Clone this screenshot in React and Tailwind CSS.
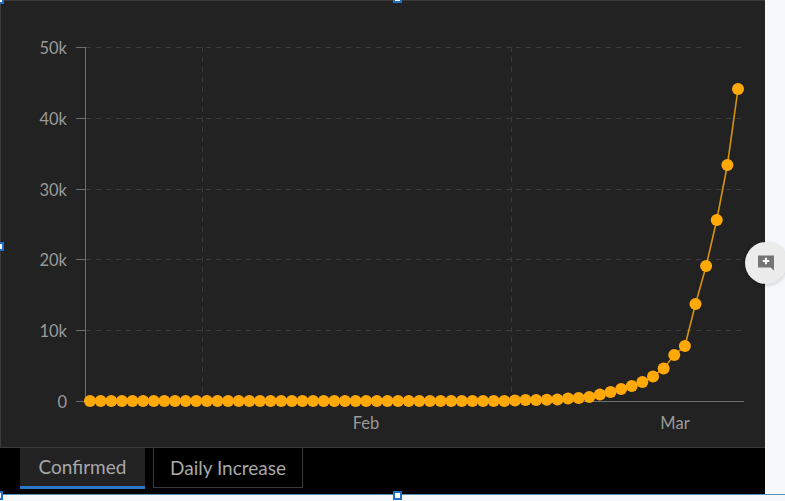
const ys = [
  400,400,400,400,400,400,400,400,400,400,400,400,400,400,400,400,400,400,400,400,400,
  400,400,400,400,400,400,400,400,400,400,400,400,400,400,400,400,400,400,400,
  399.5,399,399,398.8,398.5,397.5,397,396,393.5,391,388,385,381,375.5,367.5,354,345,303,265,219,164,88,
];
const n = ys.length;
const pts = ys.map((y, i) => [90 + (i * (738 - 90)) / (n - 1), y + 1]);
const grid = [47, 118, 189, 259, 330];
const labels = [["50k", 47], ["40k", 118], ["30k", 189], ["20k", 259], ["10k", 330], ["0", 401]];
const font = { fontFamily: "Lato, 'Noto Sans', sans-serif" };

function Chart() {
  return (
    <svg width="765" height="447" viewBox="1 1 765 447" className="block">
      {grid.map((y) => (
        <line key={y} x1="86" x2="744" y1={y + 0.5} y2={y + 0.5} stroke="#3d3d3d" strokeDasharray="5 5" />
      ))}
      {[202, 511].map((x) => (
        <line key={x} x1={x + 0.5} x2={x + 0.5} y1="47" y2="407" stroke="#3a3a3a" strokeDasharray="5 5" />
      ))}
      {labels.map(([t, y]) => (
        <g key={t}>
          <line x1="76" x2="86" y1={y + 0.5} y2={y + 0.5} stroke="#6e6e6e" />
          <text x="67" y={y + 7} textAnchor="end" fontSize="16.5" fill="#9a9a9a" style={font}>{t}</text>
        </g>
      ))}
      <line x1="85.5" x2="85.5" y1="47" y2="402" stroke="#6e6e6e" />
      <line x1="85" x2="744" y1="401.5" y2="401.5" stroke="#6e6e6e" />
      <text x="366" y="429" textAnchor="middle" fontSize="16.5" fill="#9a9a9a" style={font}>Feb</text>
      <text x="675" y="429" textAnchor="middle" fontSize="16.5" fill="#9a9a9a" style={font}>Mar</text>
      <polyline points={pts.map((p) => p.join(",")).join(" ")} fill="none" stroke="#d6920f" strokeWidth="1.6" />
      {pts.map(([x, y], i) => (
        <circle key={i} cx={x} cy={y} r="6" fill="#ffa908" />
      ))}
    </svg>
  );
}

function Handle({ className }) {
  return <div className={`absolute w-[9px] h-[9px] bg-white border-2 border-[#1f6fc4] ${className}`} />;
}

export default function App() {
  return (
    <div className="relative w-[785px] h-[501px] overflow-hidden bg-[#f7f8fb]" style={font}>
      <div className="w-[765px] h-[494px] bg-black flex flex-col">
        <div className="h-[448px] bg-[#222222] border-t border-l border-b border-[#3a3a3a]">
          <Chart />
        </div>
        <div className="flex gap-2 pl-5 items-start">
          <div className="w-[125px] h-[41px] bg-[#222222] border-b-[3px] border-[#2b78c6] flex items-center justify-center pt-px text-[19px] text-[#a8a8a8]">
            Confirmed
          </div>
          <div className="w-[150px] h-[40px] bg-black border border-t-0 border-[#3a3a3a] flex items-center justify-center pt-px text-[19px] text-[#a8a8a8]">
            Daily Increase
          </div>
        </div>
      </div>
      <div className="h-px w-full bg-[#5d8fb0]" />

      <div className="absolute left-[745px] top-[242px] w-[42px] h-[42px] rounded-full bg-[#ececec] shadow-[0_1px_4px_rgba(0,0,0,0.2)] flex items-center justify-center">
        <svg width="18" height="18" viewBox="0 0 18 18">
          <path d="M1 1.5h16v15l-3.5-3H1z" fill="#757575" />
          <path d="M9 3.8v6.4M5.8 7h6.4" stroke="#fff" strokeWidth="2" />
        </svg>
      </div>

      <Handle className="left-[-5px] top-[-5px]" />
      <Handle className="left-[393px] top-[-6px]" />
      <Handle className="left-[-5px] top-[242px]" />
      <Handle className="left-[393px] top-[491px]" />
      <Handle className="left-[-6px] top-[491px]" />
    </div>
  );
}
